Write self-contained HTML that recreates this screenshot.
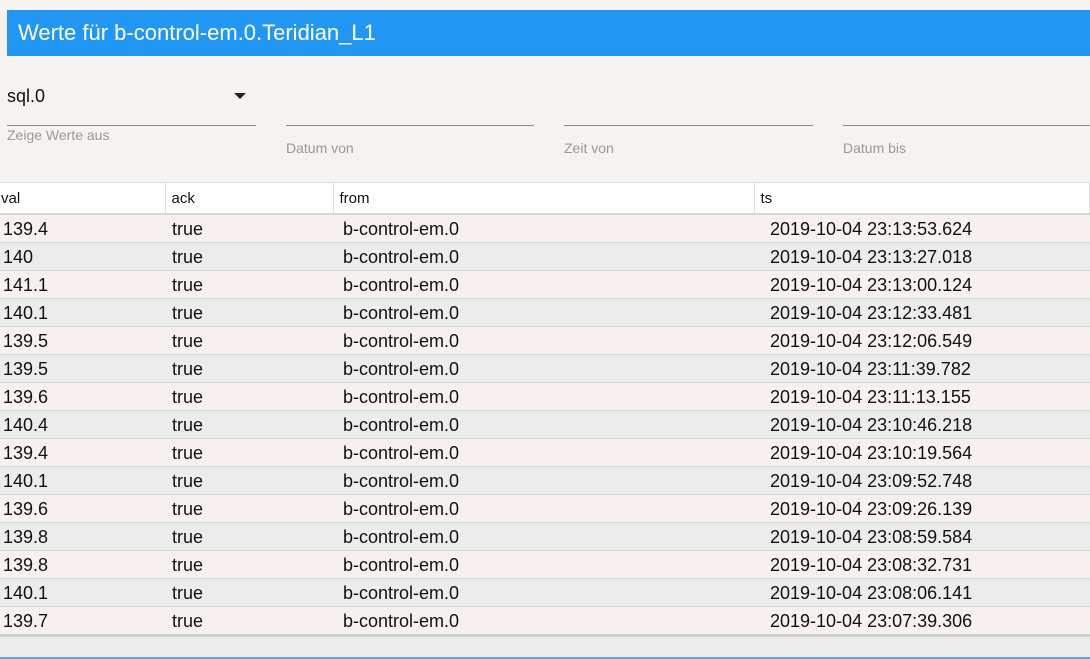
<!DOCTYPE html>
<html><head><style>
body{margin:0;width:1090px;height:659px;overflow:hidden;background:#f5f2ef;font-family:"Liberation Sans",sans-serif;position:relative}
.title{position:absolute;left:7px;top:10px;width:1083px;height:46px;background:#2196f3;color:#fff;font-size:22px;line-height:46px;padding-left:11px;box-sizing:border-box}
.abs{position:absolute}
.line{position:absolute;height:1px;background:#8a8a8a}
.lbl{position:absolute;color:#999;font-size:14px}
table{position:absolute;left:0;top:182px;width:1090px;border-collapse:collapse}
th{background:#fff;font-weight:normal;text-align:left;font-size:15px;height:29px;padding:1px 0 0 1px;border-top:1px solid #ddd;border-bottom:2px solid #d6d6d6;border-right:1px solid #ddd;color:#111}
td{font-size:18px;height:25px;border-bottom:1px solid #d6d6d6;padding:2px 0 0 0;color:#111}
tbody tr:nth-child(odd) td{background:#f6f1ee}
tbody tr:nth-child(even) td{background:#ececec}
td:nth-child(1){padding-left:3px}
td:nth-child(2){padding-left:7px}
td:nth-child(3){padding-left:10px}
td:nth-child(4){padding-left:16px}
</style></head><body>
<div class="title">Werte für b-control-em.0.Teridian_L1</div>
<div class="abs" style="left:7px;top:86px;font-size:18px;color:#111">sql.0</div>
<div class="abs" style="left:234px;top:93px;width:0;height:0;border-left:6px solid transparent;border-right:6px solid transparent;border-top:6px solid #222"></div>
<div class="line" style="left:7px;top:125px;width:249px"></div>
<div class="lbl" style="left:7px;top:127px">Zeige Werte aus</div>
<div class="line" style="left:286px;top:125px;width:248px"></div>
<div class="lbl" style="left:286px;top:140px">Datum von</div>
<div class="line" style="left:564px;top:125px;width:249px"></div>
<div class="lbl" style="left:564px;top:140px">Zeit von</div>
<div class="line" style="left:843px;top:125px;width:247px"></div>
<div class="lbl" style="left:843px;top:140px">Datum bis</div>
<table>
<colgroup><col style="width:165px"><col style="width:168px"><col style="width:421px"><col></colgroup>
<thead><tr><th>val</th><th style="padding-left:6px">ack</th><th style="padding-left:6px">from</th><th style="padding-left:6px">ts</th></tr></thead>
<tbody>
<tr><td>139.4</td><td>true</td><td>b-control-em.0</td><td>2019-10-04 23:13:53.624</td></tr>
<tr><td>140</td><td>true</td><td>b-control-em.0</td><td>2019-10-04 23:13:27.018</td></tr>
<tr><td>141.1</td><td>true</td><td>b-control-em.0</td><td>2019-10-04 23:13:00.124</td></tr>
<tr><td>140.1</td><td>true</td><td>b-control-em.0</td><td>2019-10-04 23:12:33.481</td></tr>
<tr><td>139.5</td><td>true</td><td>b-control-em.0</td><td>2019-10-04 23:12:06.549</td></tr>
<tr><td>139.5</td><td>true</td><td>b-control-em.0</td><td>2019-10-04 23:11:39.782</td></tr>
<tr><td>139.6</td><td>true</td><td>b-control-em.0</td><td>2019-10-04 23:11:13.155</td></tr>
<tr><td>140.4</td><td>true</td><td>b-control-em.0</td><td>2019-10-04 23:10:46.218</td></tr>
<tr><td>139.4</td><td>true</td><td>b-control-em.0</td><td>2019-10-04 23:10:19.564</td></tr>
<tr><td>140.1</td><td>true</td><td>b-control-em.0</td><td>2019-10-04 23:09:52.748</td></tr>
<tr><td>139.6</td><td>true</td><td>b-control-em.0</td><td>2019-10-04 23:09:26.139</td></tr>
<tr><td>139.8</td><td>true</td><td>b-control-em.0</td><td>2019-10-04 23:08:59.584</td></tr>
<tr><td>139.8</td><td>true</td><td>b-control-em.0</td><td>2019-10-04 23:08:32.731</td></tr>
<tr><td>140.1</td><td>true</td><td>b-control-em.0</td><td>2019-10-04 23:08:06.141</td></tr>
<tr><td>139.7</td><td>true</td><td>b-control-em.0</td><td>2019-10-04 23:07:39.306</td></tr>
</tbody>
</table>
<div class="abs" style="left:0;top:634px;width:1090px;height:3px;background:#d0d0d0"></div>
<div class="abs" style="left:0;top:637px;width:1090px;height:20px;background:#ededed"></div>
<div class="abs" style="left:0;top:657px;width:1090px;height:2px;background:#5aa9e6"></div>
</body></html>
